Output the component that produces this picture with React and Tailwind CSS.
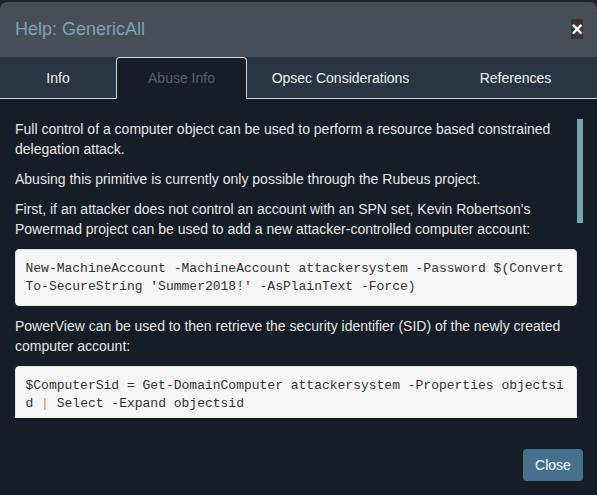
import React from 'react';

const TABS = [
  { label: 'Info', w: 'w-[116px]' },
  { label: 'Abuse Info', w: 'w-[131px]', active: true },
  { label: 'Opsec Considerations', w: 'w-[187px]' },
  { label: 'References', w: 'flex-1' },
];

export default function App() {
  return (
    <div className="h-[495px] bg-[#212327] pt-[2px] font-['Liberation_Sans',Arial,sans-serif] overflow-hidden">
      <div className="h-[493px] rounded-t-[7px] overflow-hidden bg-[#171d27] flex flex-col">
        {/* Header */}
        <div className="h-[55px] shrink-0 bg-[#474e57] flex items-center justify-between pl-[15px] pr-[14px]">
          <h4 className="text-[18px] leading-[20px] text-[#7aa3ba] mt-[-2px]">Help: GenericAll</h4>
          <button className="w-[12px] h-[20px] bg-[#3a3435] text-white font-bold text-[20px] leading-[20px] flex items-center justify-center mt-[-1px]">
            ×
          </button>
        </div>

        {/* Tabs */}
        <div className="h-[42px] shrink-0 bg-[#293445] flex border-b border-[#d6d6d6]">
          {TABS.map(t => (
            <div
              key={t.label}
              className={`${t.w} h-[42px] -mb-px flex items-center justify-center text-[14px] border rounded-t-[4px] ${
                t.active
                  ? 'border-[#d6d6d6] border-b-[#161d28] bg-[#161d28] text-[#565d67]'
                  : 'border-transparent text-[#f2f2f2]'
              }`}
            >
              {t.label}
            </div>
          ))}
        </div>

        {/* Body */}
        <div className="flex pt-[20px] pl-[15px] pr-[14px]">
          <div className="w-[562px] h-[299px] overflow-hidden text-[14px] leading-[20px] text-[#e6e6e6]">
            <p>Full control of a computer object can be used to perform a resource based constrained delegation attack.</p>
            <p className="mt-[10px]">Abusing this primitive is currently only possible through the Rubeus project.</p>
            <p className="mt-[10px]">
              First, if an attacker does not control an account with an SPN set, Kevin Robertson's Powermad project can be used to add a new attacker-controlled computer account:
            </p>
            <pre className="mt-[10px] bg-[#f5f5f5] border border-[#e3e3e3] rounded-[4px] px-[9.5px] py-[9.5px] text-[13px] leading-[18px] text-[#333] whitespace-pre-wrap break-all font-['Liberation_Mono','Courier_New',monospace]">
              New-MachineAccount -MachineAccount attackersystem -Password $(ConvertTo-SecureString 'Summer2018!' -AsPlainText -Force)
            </pre>
            <p className="mt-[10px]">PowerView can be used to then retrieve the security identifier (SID) of the newly created computer account:</p>
            <pre className="mt-[10px] h-[80px] bg-[#f5f5f5] border border-[#e3e3e3] rounded-[4px] px-[9.5px] py-[9.5px] text-[13px] leading-[18px] text-[#333] whitespace-pre-wrap break-all font-['Liberation_Mono','Courier_New',monospace]">
              $ComputerSid = Get-DomainComputer attackersystem -Properties objectsid <span className="text-[#d9822b]">|</span> Select -Expand objectsid
            </pre>
          </div>
          <div className="w-[6px] h-[299px]">
            <div className="h-[104px] bg-[#6fa6aa]" />
          </div>
        </div>

        {/* Footer */}
        <div className="flex justify-end pt-[31px] pr-[14px]">
          <button className="w-[60px] h-[32px] rounded-[4px] bg-[#45718f] text-white text-[14px]">Close</button>
        </div>
      </div>
    </div>
  );
}
